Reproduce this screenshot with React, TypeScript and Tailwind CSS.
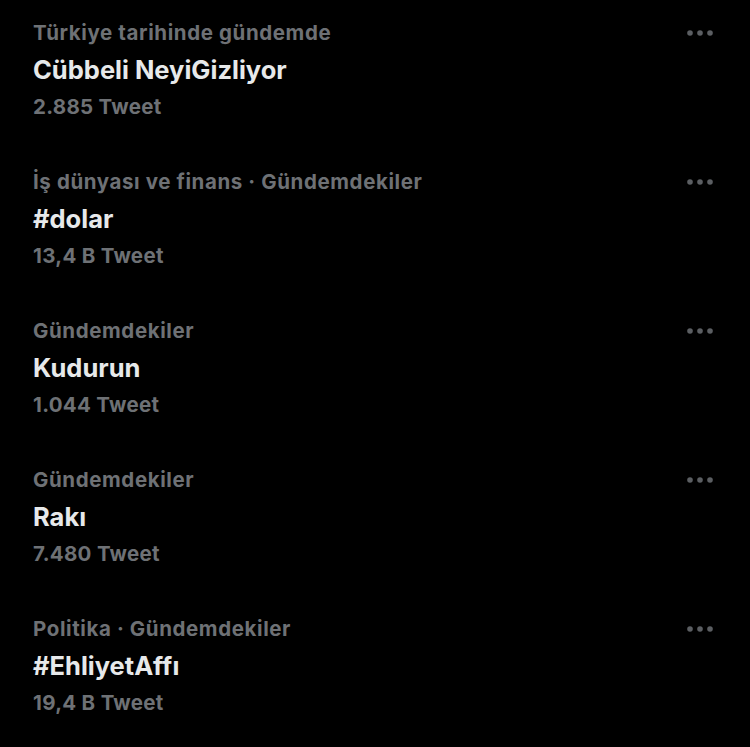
import React from "react";

type Trend = { context: string; title: string; count: string };

const trends: Trend[] = [
  { context: "Türkiye tarihinde gündemde", title: "Cübbeli NeyiGizliyor", count: "2.885 Tweet" },
  { context: "İş dünyası ve finans · Gündemdekiler", title: "#dolar", count: "13,4 B Tweet" },
  { context: "Gündemdekiler", title: "Kudurun", count: "1.044 Tweet" },
  { context: "Gündemdekiler", title: "Rakı", count: "7.480 Tweet" },
  { context: "Politika · Gündemdekiler", title: "#EhliyetAffı", count: "19,4 B Tweet" },
];

const MoreDots = () => (
  <svg width="28" height="8" viewBox="0 0 28 8" className="shrink-0">
    <circle cx="4" cy="4" r="2.8" fill="#5b5e62" />
    <circle cx="14" cy="4" r="2.8" fill="#5b5e62" />
    <circle cx="24" cy="4" r="2.8" fill="#5b5e62" />
  </svg>
);

const TrendRow = ({ t }: { t: Trend }) => (
  <div className="h-[149px] pl-[33px] pr-[36px] pt-[21px]">
    <div className="flex items-center justify-between h-[24px]">
      <span className="text-[20.5px] leading-[24px] font-bold tracking-[0.6px] text-[#6e7175]">{t.context}</span>
      <MoreDots />
    </div>
    <div className="mt-[10px] text-[25.5px] leading-[30px] font-bold text-[#e7e9ea]">{t.title}</div>
    <div className="mt-[10px] text-[20.5px] leading-[24px] font-bold tracking-[0.3px] text-[#6e7175]">{t.count}</div>
  </div>
);

export default function App() {
  return (
    <div
      className="w-[750px] h-[747px] bg-black overflow-hidden"
      style={{ fontFamily: "Inter, 'Liberation Sans', sans-serif" }}
    >
      {trends.map((t) => (
        <TrendRow key={t.title} t={t} />
      ))}
    </div>
  );
}
